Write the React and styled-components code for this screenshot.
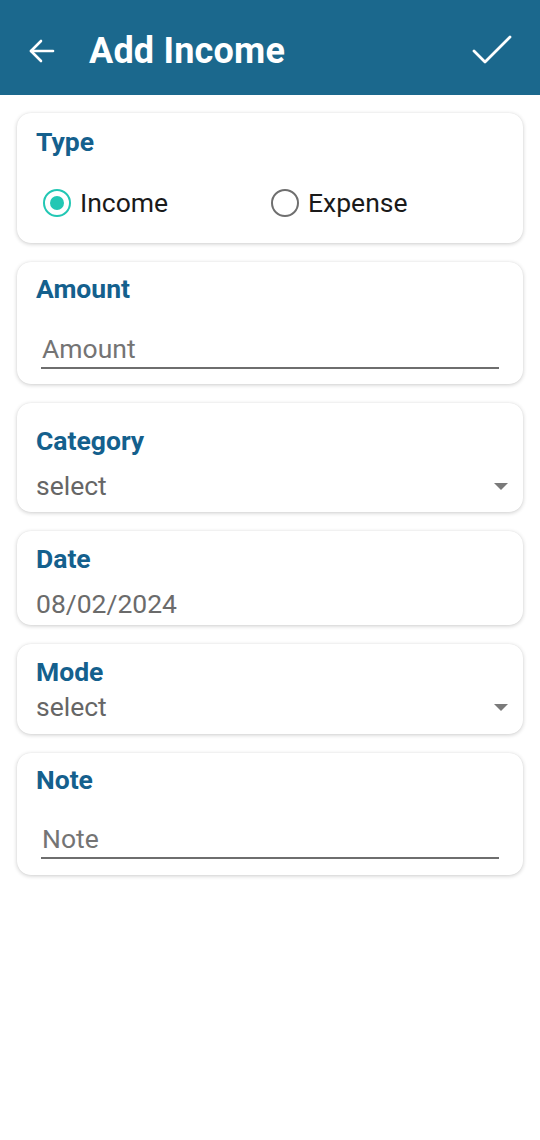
import React from 'react'
import styled, { createGlobalStyle } from 'styled-components'

const GlobalStyle = createGlobalStyle`
    html, body {
        margin: 0;
        padding: 0;
        background: #ffffff;
        font-family: Roboto, "Noto Sans", Arial, sans-serif;
    }
`

const Page = styled.div`
    width: 540px;
    min-height: 1140px;
    background: #ffffff;
`

const Toolbar = styled.header`
    height: 95px;
    background: #1b688d;
    display: flex;
    align-items: center;
    padding: 6px 28px 0 28px;
    box-sizing: border-box;
    color: #ffffff;
`

const IconButton = styled.button`
    background: none;
    border: none;
    padding: 0;
    display: flex;
    align-items: center;
    justify-content: center;
    color: #ffffff;
    margin-top: ${(p) => p.$top || 0}px;
`

const Title = styled.h1`
    flex: 1;
    margin: 0 0 0 33px;
    font-size: 36px;
    font-weight: 700;
    letter-spacing: 0.2px;
`

const Form = styled.div`
    display: flex;
    flex-direction: column;
    gap: 19px;
    padding: 18px 17px;
`

const Card = styled.section`
    background: #ffffff;
    border-radius: 14px;
    box-shadow: 0 1px 4px rgba(0, 0, 0, 0.2), 0 0 1px rgba(0, 0, 0, 0.08);
    padding: ${(p) => p.$top}px 19px ${(p) => p.$bottom}px 19px;
    display: flex;
    flex-direction: column;
`

const Label = styled.div`
    font-size: 26.5px;
    line-height: 30px;
    font-weight: 700;
    color: #14608d;
    margin-bottom: ${(p) => p.$gap || 0}px;
`

const RadioRow = styled.div`
    display: flex;
    align-items: center;
    padding-left: 7px;
`

const RadioOption = styled.label`
    display: flex;
    align-items: center;
    gap: 9px;
    width: 228px;
    font-size: 26.5px;
    line-height: 30px;
    color: #1a1a1a;
`

const RadioCircle = styled.span`
    width: 28px;
    height: 28px;
    box-sizing: border-box;
    border-radius: 50%;
    border: 2.5px solid ${(p) => (p.$checked ? '#22c7b4' : '#6f6f6f')};
    display: flex;
    align-items: center;
    justify-content: center;

    &::after {
        content: '';
        width: 14px;
        height: 14px;
        border-radius: 50%;
        background: ${(p) => (p.$checked ? '#22c7b4' : 'transparent')};
    }
`

const Input = styled.div`
    margin: 0 5px;
    padding-left: 1px;
    font-size: 26.5px;
    line-height: 30px;
    color: #747474;
    border-bottom: 2px solid #6e6e6e;
    padding-bottom: 3px;
`

const Spinner = styled.div`
    display: flex;
    align-items: center;
    justify-content: space-between;
    font-size: 26.5px;
    line-height: 30px;
    color: #666666;
`

const Caret = styled.span`
    width: 0;
    height: 0;
    margin-right: -4px;
    border-left: 7px solid transparent;
    border-right: 7px solid transparent;
    border-top: 7px solid #7a7a7a;
`

const Value = styled.div`
    font-size: 26.5px;
    line-height: 30px;
    color: #6b6b6b;
`

const BackIcon = () => (
    <svg width="28" height="28" viewBox="0 0 28 28" fill="none" stroke="currentColor" strokeWidth="2.6" strokeLinecap="round" strokeLinejoin="round">
        <path d="M25 14H3" />
        <path d="M13 4L3 14l10 10" />
    </svg>
)

const CheckIcon = () => (
    <svg width="40" height="30" viewBox="0 0 40 30" fill="none" stroke="currentColor" strokeWidth="2.8" strokeLinecap="round" strokeLinejoin="round">
        <path d="M2 16l11 11L38 2" />
    </svg>
)

const App = () => {
    return (
        <Page>
            <GlobalStyle />
            <Toolbar>
                <IconButton $top={0}>
                    <BackIcon />
                </IconButton>
                <Title>Add Income</Title>
                <IconButton $top={-2}>
                    <CheckIcon />
                </IconButton>
            </Toolbar>

            <Form>
                <Card $top={14} $bottom={25}>
                    <Label $gap={31}>Type</Label>
                    <RadioRow>
                        <RadioOption>
                            <RadioCircle $checked />
                            Income
                        </RadioOption>
                        <RadioOption>
                            <RadioCircle />
                            Expense
                        </RadioOption>
                    </RadioRow>
                </Card>

                <Card $top={12} $bottom={15}>
                    <Label $gap={30}>Amount</Label>
                    <Input>Amount</Input>
                </Card>

                <Card $top={23} $bottom={11}>
                    <Label $gap={15}>Category</Label>
                    <Spinner>
                        select
                        <Caret />
                    </Spinner>
                </Card>

                <Card $top={13} $bottom={6}>
                    <Label $gap={15}>Date</Label>
                    <Value>08/02/2024</Value>
                </Card>

                <Card $top={13} $bottom={12}>
                    <Label $gap={5}>Mode</Label>
                    <Spinner>
                        select
                        <Caret />
                    </Spinner>
                </Card>

                <Card $top={12} $bottom={16}>
                    <Label $gap={29}>Note</Label>
                    <Input>Note</Input>
                </Card>
            </Form>
        </Page>
    )
}

export default App
